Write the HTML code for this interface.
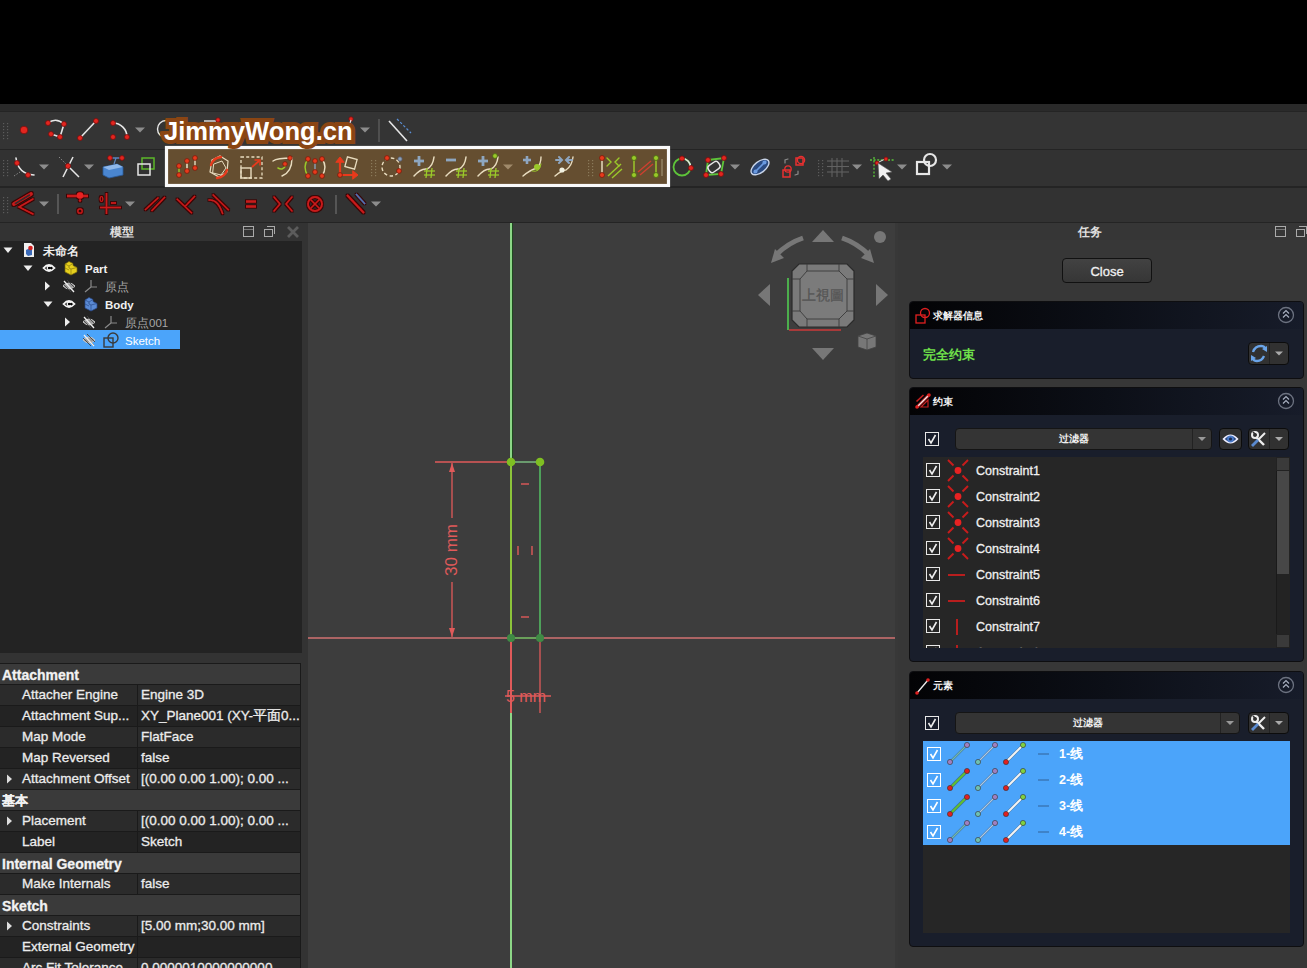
<!DOCTYPE html>
<html><head><meta charset="utf-8">
<style>
*{box-sizing:border-box;margin:0;padding:0}
html,body{width:1307px;height:968px;overflow:hidden;background:#000}
body{position:relative;font-family:"Liberation Sans",sans-serif;color:#fff}
.a{position:absolute;white-space:nowrap}
svg{position:absolute;left:0;top:0;overflow:visible}
.t{-webkit-text-stroke:0.3px currentColor}
.cb{position:absolute;width:14px;height:14px;border:1.5px solid #e8e8e8}
</style></head><body>

<div class="a" style="left:0;top:104px;width:1307px;height:7px;background:#2a2a2a"></div>
<div class="a" style="left:0;top:111px;width:1307px;height:1px;background:#242424"></div>
<div class="a" style="left:0;top:112px;width:1307px;height:110px;background:#343434"></div>
<div class="a" style="left:0;top:150px;width:1307px;height:72px;background:#323232"></div>
<div class="a" style="left:0;top:149px;width:1307px;height:1px;background:#242424"></div>
<div class="a" style="left:0;top:186px;width:1307px;height:2px;background:#242424"></div>
<div class="a" style="left:0;top:222px;width:1307px;height:1px;background:#242424"></div>
<div class="a" style="left:0;top:223px;width:1307px;height:745px;background:#333"></div>
<svg width="1307" height="968" viewBox="0 0 1307 968"><rect x="3" y="123" width="1.2" height="1.2" fill="#5c5c5c"/><rect x="7" y="123" width="1.2" height="1.2" fill="#5c5c5c"/><rect x="3" y="126" width="1.2" height="1.2" fill="#5c5c5c"/><rect x="7" y="126" width="1.2" height="1.2" fill="#5c5c5c"/><rect x="3" y="129" width="1.2" height="1.2" fill="#5c5c5c"/><rect x="7" y="129" width="1.2" height="1.2" fill="#5c5c5c"/><rect x="3" y="132" width="1.2" height="1.2" fill="#5c5c5c"/><rect x="7" y="132" width="1.2" height="1.2" fill="#5c5c5c"/><rect x="3" y="135" width="1.2" height="1.2" fill="#5c5c5c"/><rect x="7" y="135" width="1.2" height="1.2" fill="#5c5c5c"/><rect x="3" y="138" width="1.2" height="1.2" fill="#5c5c5c"/><rect x="7" y="138" width="1.2" height="1.2" fill="#5c5c5c"/><circle cx="24" cy="130" r="3.8" fill="#e3261f" stroke="#7a0d0d" stroke-width="0.8"/><path d="M48,123 Q56,117 64,124 L60,137 L51,134" stroke="#e6e6e6" stroke-width="1.6" fill="none" stroke-linecap="round" /><circle cx="48" cy="123" r="2.5" fill="#e3261f" stroke="#7a0d0d" stroke-width="0.8"/><circle cx="64" cy="124" r="2.5" fill="#e3261f" stroke="#7a0d0d" stroke-width="0.8"/><circle cx="60" cy="137" r="2.5" fill="#e3261f" stroke="#7a0d0d" stroke-width="0.8"/><circle cx="51" cy="134" r="2.5" fill="#e3261f" stroke="#7a0d0d" stroke-width="0.8"/><line x1="80" y1="138" x2="96" y2="121" stroke="#e6e6e6" stroke-width="1.6" /><circle cx="80" cy="138" r="2.5" fill="#e3261f" stroke="#7a0d0d" stroke-width="0.8"/><circle cx="96" cy="121" r="2.5" fill="#e3261f" stroke="#7a0d0d" stroke-width="0.8"/><path d="M113,123 A14,14 0 0 1 127,137" stroke="#e6e6e6" stroke-width="1.6" fill="none" stroke-linecap="round" /><circle cx="113" cy="123" r="2.5" fill="#e3261f" stroke="#7a0d0d" stroke-width="0.8"/><circle cx="113" cy="137" r="2.5" fill="#e3261f" stroke="#7a0d0d" stroke-width="0.8"/><circle cx="127" cy="137" r="2.5" fill="#e3261f" stroke="#7a0d0d" stroke-width="0.8"/><path d="M135,127.5 L145,127.5 L140,132.5Z" fill="#8c8c8c"/><circle cx="166" cy="129" r="8.5" fill="none" stroke="#e6e6e6" stroke-width="1.4"/><circle cx="163" cy="134" r="2.3" fill="#e3261f" stroke="#7a0d0d" stroke-width="0.8"/><line x1="204" y1="121" x2="216" y2="121" stroke="#e6e6e6" stroke-width="1.4" /><circle cx="218" cy="120" r="2.2" fill="#e3261f" stroke="#7a0d0d" stroke-width="0.8"/><circle cx="351" cy="119" r="2.2" fill="#e3261f" stroke="#7a0d0d" stroke-width="0.8"/><line x1="351" y1="120" x2="349" y2="126" stroke="#e6e6e6" stroke-width="1.2" /><path d="M360,127.5 L370,127.5 L365,132.5Z" fill="#8c8c8c"/><line x1="379" y1="119" x2="379" y2="142" stroke="#5f5f5f" stroke-width="1.3"/><line x1="389" y1="121" x2="407" y2="141" stroke="#e6e6e6" stroke-width="1.6" /><line x1="397" y1="119" x2="411" y2="133" stroke="#5b8fd6" stroke-width="1.2" stroke-dasharray="2.5,2"/><rect x="3" y="160" width="1.2" height="1.2" fill="#5c5c5c"/><rect x="7" y="160" width="1.2" height="1.2" fill="#5c5c5c"/><rect x="3" y="163" width="1.2" height="1.2" fill="#5c5c5c"/><rect x="7" y="163" width="1.2" height="1.2" fill="#5c5c5c"/><rect x="3" y="166" width="1.2" height="1.2" fill="#5c5c5c"/><rect x="7" y="166" width="1.2" height="1.2" fill="#5c5c5c"/><rect x="3" y="169" width="1.2" height="1.2" fill="#5c5c5c"/><rect x="7" y="169" width="1.2" height="1.2" fill="#5c5c5c"/><rect x="3" y="172" width="1.2" height="1.2" fill="#5c5c5c"/><rect x="7" y="172" width="1.2" height="1.2" fill="#5c5c5c"/><rect x="3" y="175" width="1.2" height="1.2" fill="#5c5c5c"/><rect x="7" y="175" width="1.2" height="1.2" fill="#5c5c5c"/><path d="M16,158 Q18,174 34,175" stroke="#e6e6e6" stroke-width="1.6" fill="none" stroke-linecap="round" /><line x1="14" y1="176" x2="20" y2="172" stroke="#888" stroke-width="1" stroke-dasharray="1.5,1.5"/><circle cx="17" cy="163" r="2.5" fill="#e3261f" stroke="#7a0d0d" stroke-width="0.8"/><circle cx="28" cy="175" r="2.5" fill="#e3261f" stroke="#7a0d0d" stroke-width="0.8"/><path d="M39,164.5 L49,164.5 L44,169.5Z" fill="#8c8c8c"/><line x1="73" y1="157" x2="63" y2="177" stroke="#e6e6e6" stroke-width="1.5" /><line x1="68" y1="166" x2="79" y2="177" stroke="#e6e6e6" stroke-width="1.5" /><line x1="59" y1="157" x2="66" y2="164" stroke="#888" stroke-width="1" stroke-dasharray="1.5,1.5"/><circle cx="68" cy="166" r="2.6" fill="#e3261f" stroke="#7a0d0d" stroke-width="0.8"/><path d="M84,164.5 L94,164.5 L89,169.5Z" fill="#8c8c8c"/><path d="M103,167 L117,164 L123,167 L123,175 L109,178 L103,175Z" fill="#4a86d0" stroke="#2a5a9a" stroke-width="0.8"/><path d="M103,167 L117,164 L123,167 L109,170Z" fill="#8fb8ea"/><line x1="110" y1="158" x2="122" y2="158" stroke="#5a86c0" stroke-width="1.5" /><line x1="116" y1="158" x2="114" y2="164" stroke="#5a86c0" stroke-width="1.2" /><circle cx="110" cy="158" r="2.4" fill="#e3261f" stroke="#7a0d0d" stroke-width="0.8"/><circle cx="122" cy="158" r="2.4" fill="#e3261f" stroke="#7a0d0d" stroke-width="0.8"/><rect x="142" y="158" width="12" height="11" fill="none" stroke="#5cb82a" stroke-width="1.5"/><rect x="138" y="164" width="12" height="11" fill="none" stroke="#e6e6e6" stroke-width="1.5"/><rect x="166.5" y="147.5" width="502" height="38" fill="#654e30" stroke="#fafafa" stroke-width="3.2"/><line x1="179" y1="166" x2="179" y2="175" stroke="#9bc92a" stroke-width="1.4" /><line x1="187" y1="161" x2="187" y2="171" stroke="#e8dcbf" stroke-width="1.6" /><line x1="195" y1="158" x2="195" y2="168" stroke="#e8dcbf" stroke-width="1.4" /><circle cx="179" cy="166" r="2.4" fill="#e83a1c" stroke="#7a1a0a" stroke-width="0.8"/><circle cx="179" cy="175" r="2.4" fill="#e83a1c" stroke="#7a1a0a" stroke-width="0.8"/><circle cx="187" cy="161" r="2.4" fill="#e83a1c" stroke="#7a1a0a" stroke-width="0.8"/><circle cx="187" cy="171" r="2.4" fill="#e83a1c" stroke="#7a1a0a" stroke-width="0.8"/><circle cx="195" cy="158" r="2.4" fill="#e83a1c" stroke="#7a1a0a" stroke-width="0.8"/><circle cx="195" cy="168" r="2.4" fill="#e83a1c" stroke="#7a1a0a" stroke-width="0.8"/><path d="M212,160 L220,156 L228,161 L227,172 L219,177 L210,172Z" stroke="#e8dcbf" stroke-width="1.2" fill="none" stroke-linecap="round" /><path d="M214,164 L222,161 L226,168 L221,175 L213,173Z" stroke="#e8dcbf" stroke-width="1.0" fill="none" stroke-linecap="round" /><path d="M211,165 Q213,158 221,157" stroke="#e83a1c" stroke-width="2.4" fill="none" stroke-linecap="round" /><path d="M227,170 Q225,177 217,178" stroke="#e83a1c" stroke-width="2.4" fill="none" stroke-linecap="round" /><rect x="241" y="157" width="21" height="21" fill="none" stroke="#e8dcbf" stroke-width="1.3" stroke-dasharray="3,2.2"/><rect x="241" y="168" width="10" height="10" fill="none" stroke="#e8dcbf" stroke-width="1.4"/><line x1="252" y1="167" x2="259" y2="161" stroke="#e83a1c" stroke-width="1.8" /><path d="M255,160 L260,160 L260,165" stroke="#e83a1c" stroke-width="1.4" fill="none" stroke-linecap="round" /><path d="M273,161 Q277,158 292,158 Q292,172 282,176" stroke="#e8dcbf" stroke-width="1.4" fill="none" stroke-linecap="round" /><path d="M278,168 Q283,171 286,165" stroke="#9bc92a" stroke-width="1.6" fill="none" stroke-linecap="round" /><circle cx="290" cy="158" r="2.3" fill="#e83a1c" stroke="#7a1a0a" stroke-width="0.8"/><circle cx="285" cy="164" r="2.3" fill="#e83a1c" stroke="#7a1a0a" stroke-width="0.8"/><path d="M308,159 Q302,167 308,176" stroke="#9bc92a" stroke-width="1.4" fill="none" stroke-linecap="round" /><path d="M322,159 Q328,167 322,176" stroke="#e8dcbf" stroke-width="1.4" fill="none" stroke-linecap="round" /><line x1="315" y1="161" x2="315" y2="172" stroke="#8ea6c0" stroke-width="1.3" /><circle cx="308" cy="159" r="2.4" fill="#e83a1c" stroke="#7a1a0a" stroke-width="0.8"/><circle cx="308" cy="176" r="2.4" fill="#e83a1c" stroke="#7a1a0a" stroke-width="0.8"/><circle cx="322" cy="159" r="2.4" fill="#e83a1c" stroke="#7a1a0a" stroke-width="0.8"/><circle cx="322" cy="176" r="2.4" fill="#e83a1c" stroke="#7a1a0a" stroke-width="0.8"/><circle cx="315" cy="161" r="2.4" fill="#e83a1c" stroke="#7a1a0a" stroke-width="0.8"/><circle cx="315" cy="172" r="2.4" fill="#e83a1c" stroke="#7a1a0a" stroke-width="0.8"/><path d="M340,175 L340,159" stroke="#e83a1c" stroke-width="2.2" fill="none" stroke-linecap="round" /><path d="M340,175 L356,175" stroke="#e83a1c" stroke-width="2.2" fill="none" stroke-linecap="round" /><path d="M336,162 L340,157 L344,162Z" stroke="#e83a1c" stroke-width="1" fill="#e83a1c" stroke-linecap="round" /><path d="M353,171 L358,175 L353,179Z" stroke="#e83a1c" stroke-width="1" fill="#e83a1c" stroke-linecap="round" /><circle cx="340" cy="175" r="2.4" fill="#e83a1c" stroke="#7a1a0a" stroke-width="0.8"/><rect x="346" y="158" width="10" height="10" fill="none" stroke="#e8dcbf" stroke-width="1.3" transform="rotate(15 351 163)"/><rect x="371" y="160" width="1.2" height="1.2" fill="#8a7a5a"/><rect x="375" y="160" width="1.2" height="1.2" fill="#8a7a5a"/><rect x="371" y="163" width="1.2" height="1.2" fill="#8a7a5a"/><rect x="375" y="163" width="1.2" height="1.2" fill="#8a7a5a"/><rect x="371" y="166" width="1.2" height="1.2" fill="#8a7a5a"/><rect x="375" y="166" width="1.2" height="1.2" fill="#8a7a5a"/><rect x="371" y="169" width="1.2" height="1.2" fill="#8a7a5a"/><rect x="375" y="169" width="1.2" height="1.2" fill="#8a7a5a"/><rect x="371" y="172" width="1.2" height="1.2" fill="#8a7a5a"/><rect x="375" y="172" width="1.2" height="1.2" fill="#8a7a5a"/><rect x="371" y="175" width="1.2" height="1.2" fill="#8a7a5a"/><rect x="375" y="175" width="1.2" height="1.2" fill="#8a7a5a"/><circle cx="391" cy="167" r="9" fill="none" stroke="#e8dcbf" stroke-width="1.4" stroke-dasharray="3.5,2.5"/><circle cx="387" cy="158" r="2.4" fill="#e83a1c" stroke="#7a1a0a" stroke-width="0.8"/><circle cx="399" cy="171" r="2.4" fill="#e83a1c" stroke="#7a1a0a" stroke-width="0.8"/><circle cx="400" cy="159" r="2.2" fill="#8aa0b8" stroke="#556" stroke-width="0.8"/><path d="M414,176 Q421,168 427,169 Q433,166 434,157" stroke="#e8dcbf" stroke-width="1.5" fill="none" stroke-linecap="round" /><line x1="414" y1="161" x2="424" y2="161" stroke="#8ea6c0" stroke-width="2.8" /><line x1="419" y1="156" x2="419" y2="166" stroke="#8ea6c0" stroke-width="2.8" /><line x1="427" y1="168" x2="426" y2="178" stroke="#9bc92a" stroke-width="1.3" /><line x1="432" y1="168" x2="431" y2="178" stroke="#9bc92a" stroke-width="1.3" /><line x1="424" y1="171" x2="435" y2="171" stroke="#9bc92a" stroke-width="1.3" /><line x1="424" y1="175" x2="435" y2="175" stroke="#9bc92a" stroke-width="1.3" /><path d="M446,176 Q453,168 459,169 Q465,166 466,157" stroke="#e8dcbf" stroke-width="1.5" fill="none" stroke-linecap="round" /><line x1="446" y1="160" x2="456" y2="160" stroke="#8ea6c0" stroke-width="2.8" /><line x1="459" y1="168" x2="458" y2="178" stroke="#9bc92a" stroke-width="1.3" /><line x1="464" y1="168" x2="463" y2="178" stroke="#9bc92a" stroke-width="1.3" /><line x1="456" y1="171" x2="467" y2="171" stroke="#9bc92a" stroke-width="1.3" /><line x1="456" y1="175" x2="467" y2="175" stroke="#9bc92a" stroke-width="1.3" /><path d="M478,176 Q485,168 491,169 Q497,166 498,157" stroke="#e8dcbf" stroke-width="1.5" fill="none" stroke-linecap="round" /><line x1="478" y1="161" x2="488" y2="161" stroke="#8ea6c0" stroke-width="2.8" /><line x1="483" y1="156" x2="483" y2="166" stroke="#8ea6c0" stroke-width="2.8" /><line x1="491" y1="168" x2="490" y2="178" stroke="#9bc92a" stroke-width="1.3" /><line x1="496" y1="168" x2="495" y2="178" stroke="#9bc92a" stroke-width="1.3" /><line x1="488" y1="171" x2="499" y2="171" stroke="#9bc92a" stroke-width="1.3" /><line x1="488" y1="175" x2="499" y2="175" stroke="#9bc92a" stroke-width="1.3" /><circle cx="495" cy="156" r="2.4" fill="#9bc92a" stroke="#4a6a10" stroke-width="0.8"/><path d="M503,164.5 L513,164.5 L508,169.5Z" fill="#a08a6a"/><path d="M523,176 Q530,170 537,168 Q541,164 541,157" stroke="#e8dcbf" stroke-width="1.4" fill="none" stroke-linecap="round" /><line x1="523" y1="160" x2="531" y2="160" stroke="#8ea6c0" stroke-width="2.6" /><line x1="527" y1="156" x2="527" y2="164" stroke="#8ea6c0" stroke-width="2.6" /><circle cx="537" cy="167" r="3" fill="#9bc92a"/><path d="M532,171 Q540,173 541,164" stroke="#9bc92a" stroke-width="1" fill="none" stroke-linecap="round" /><path d="M555,176 Q562,170 566,170 Q572,166 573,157" stroke="#e8dcbf" stroke-width="1.4" fill="none" stroke-linecap="round" /><path d="M556,160 L561,160 M559,157 L562,160 L559,163" stroke="#8ea6c0" stroke-width="2" fill="none" stroke-linecap="round" /><path d="M572,160 L567,160 M569,157 L566,160 L569,163" stroke="#8ea6c0" stroke-width="2" fill="none" stroke-linecap="round" /><circle cx="562" cy="170" r="2.6" fill="#f0f0e0"/><rect x="588" y="160" width="1.2" height="1.2" fill="#8a7a5a"/><rect x="592" y="160" width="1.2" height="1.2" fill="#8a7a5a"/><rect x="588" y="163" width="1.2" height="1.2" fill="#8a7a5a"/><rect x="592" y="163" width="1.2" height="1.2" fill="#8a7a5a"/><rect x="588" y="166" width="1.2" height="1.2" fill="#8a7a5a"/><rect x="592" y="166" width="1.2" height="1.2" fill="#8a7a5a"/><rect x="588" y="169" width="1.2" height="1.2" fill="#8a7a5a"/><rect x="592" y="169" width="1.2" height="1.2" fill="#8a7a5a"/><rect x="588" y="172" width="1.2" height="1.2" fill="#8a7a5a"/><rect x="592" y="172" width="1.2" height="1.2" fill="#8a7a5a"/><rect x="588" y="175" width="1.2" height="1.2" fill="#8a7a5a"/><rect x="592" y="175" width="1.2" height="1.2" fill="#8a7a5a"/><line x1="602" y1="158" x2="602" y2="175" stroke="#e8dcbf" stroke-width="1.5" /><circle cx="602" cy="158" r="2.5" fill="#e83a1c" stroke="#7a1a0a" stroke-width="0.8"/><circle cx="602" cy="175" r="2.5" fill="#e83a1c" stroke="#7a1a0a" stroke-width="0.8"/><path d="M607,158 L611,162 L607,166 M619,158 L615,162 L619,166" stroke="#9bc92a" stroke-width="1.4" fill="none" stroke-linecap="round" /><line x1="608" y1="176" x2="621" y2="164" stroke="#9bc92a" stroke-width="1.4" /><line x1="612" y1="178" x2="622" y2="169" stroke="#9bc92a" stroke-width="1.4" /><line x1="634" y1="158" x2="634" y2="175" stroke="#9bc92a" stroke-width="1.5" /><line x1="656" y1="158" x2="656" y2="175" stroke="#9bc92a" stroke-width="1.5" /><circle cx="634" cy="158" r="2.5" fill="#9bc92a" stroke="#4a6a10" stroke-width="0.8"/><circle cx="634" cy="175" r="2.5" fill="#9bc92a" stroke="#4a6a10" stroke-width="0.8"/><circle cx="656" cy="158" r="2.5" fill="#9bc92a" stroke="#4a6a10" stroke-width="0.8"/><circle cx="656" cy="175" r="2.5" fill="#9bc92a" stroke="#4a6a10" stroke-width="0.8"/><line x1="638" y1="172" x2="651" y2="161" stroke="#d04030" stroke-width="1.3" /><line x1="640" y1="175" x2="653" y2="164" stroke="#d04030" stroke-width="1.3" /><line x1="662" y1="159" x2="662" y2="176" stroke="#9a8a6a" stroke-width="1.3"/><circle cx="682" cy="167" r="8.5" fill="none" stroke="#5ec43a" stroke-width="1.8"/><path d="M682,158.5 A8.5,8.5 0 0 1 690.5,167" stroke="#e0e0e0" stroke-width="1.6" fill="none" stroke-linecap="round" /><circle cx="682" cy="158.5" r="2.5" fill="#e3261f" stroke="#7a0d0d" stroke-width="0.8"/><circle cx="691" cy="168" r="2.5" fill="#e3261f" stroke="#7a0d0d" stroke-width="0.8"/><path d="M708,160 L724,158 L721,174 L706,175Z" fill="none" stroke="#5ec43a" stroke-width="1.8"/><rect x="708" y="163" width="12" height="8" rx="3" fill="#343434" stroke="#e6e6e6" stroke-width="1.5" transform="rotate(-35 714 167)"/><circle cx="708" cy="160" r="2.5" fill="#e3261f" stroke="#7a0d0d" stroke-width="0.8"/><circle cx="724" cy="158" r="2.5" fill="#e3261f" stroke="#7a0d0d" stroke-width="0.8"/><circle cx="721" cy="174" r="2.5" fill="#e3261f" stroke="#7a0d0d" stroke-width="0.8"/><circle cx="706" cy="175" r="2.5" fill="#e3261f" stroke="#7a0d0d" stroke-width="0.8"/><path d="M730,164.5 L740,164.5 L735,169.5Z" fill="#8c8c8c"/><ellipse cx="760" cy="167" rx="10.5" ry="5.5" fill="#2a4a80" stroke="#c8d4e8" stroke-width="1.4" transform="rotate(-38 760 167)"/><line x1="754" y1="173" x2="766" y2="161" stroke="#6a9ae0" stroke-width="1.6" /><circle cx="755.5" cy="171.5" r="2" fill="#6a9ae0"/><circle cx="764.5" cy="162.5" r="2" fill="#6a9ae0"/><rect x="783" y="170" width="7" height="7" fill="none" stroke="#e83030" stroke-width="1.5"/><rect x="796" y="158" width="7" height="7" fill="none" stroke="#e83030" stroke-width="1.5"/><circle cx="801" cy="160" r="3.6" fill="none" stroke="#e83030" stroke-width="1.4"/><circle cx="788" cy="169" r="3.2" fill="none" stroke="#e83030" stroke-width="1.3"/><path d="M785,163 L785,160 L788,159 M798,171 L798,174 L795,175" stroke="#8a8a8a" stroke-width="1.2" fill="none" stroke-linecap="round" /><rect x="818" y="160" width="1.2" height="1.2" fill="#5c5c5c"/><rect x="822" y="160" width="1.2" height="1.2" fill="#5c5c5c"/><rect x="818" y="163" width="1.2" height="1.2" fill="#5c5c5c"/><rect x="822" y="163" width="1.2" height="1.2" fill="#5c5c5c"/><rect x="818" y="166" width="1.2" height="1.2" fill="#5c5c5c"/><rect x="822" y="166" width="1.2" height="1.2" fill="#5c5c5c"/><rect x="818" y="169" width="1.2" height="1.2" fill="#5c5c5c"/><rect x="822" y="169" width="1.2" height="1.2" fill="#5c5c5c"/><rect x="818" y="172" width="1.2" height="1.2" fill="#5c5c5c"/><rect x="822" y="172" width="1.2" height="1.2" fill="#5c5c5c"/><rect x="818" y="175" width="1.2" height="1.2" fill="#5c5c5c"/><rect x="822" y="175" width="1.2" height="1.2" fill="#5c5c5c"/><line x1="832" y1="158" x2="832" y2="177" stroke="#626262" stroke-width="1.1" /><line x1="827" y1="161.0" x2="849" y2="161.0" stroke="#626262" stroke-width="1.1" /><line x1="837" y1="158" x2="837" y2="177" stroke="#626262" stroke-width="1.1" /><line x1="827" y1="166.5" x2="849" y2="166.5" stroke="#626262" stroke-width="1.1" /><line x1="842" y1="158" x2="842" y2="177" stroke="#626262" stroke-width="1.1" /><line x1="827" y1="172.0" x2="849" y2="172.0" stroke="#626262" stroke-width="1.1" /><path d="M852,164.5 L862,164.5 L857,169.5Z" fill="#8c8c8c"/><line x1="874" y1="157" x2="874" y2="178" stroke="#5ac43a" stroke-width="1.3" stroke-dasharray="2,1.6"/><line x1="870" y1="160" x2="894" y2="160" stroke="#5ac43a" stroke-width="1.3" stroke-dasharray="2,1.6"/><line x1="877" y1="163" x2="885" y2="159" stroke="#e0e0e0" stroke-width="1" /><circle cx="877" cy="163" r="2" fill="#e3261f" stroke="#7a0d0d" stroke-width="0.8"/><circle cx="886" cy="159" r="2" fill="#e3261f" stroke="#7a0d0d" stroke-width="0.8"/><path d="M878,163 L892,172 L886,173 L891,179 L888,181 L883,175 L879,179Z" fill="#f0f0f0" stroke="#555" stroke-width="0.6"/><path d="M897,164.5 L907,164.5 L902,169.5Z" fill="#8c8c8c"/><rect x="917" y="162" width="12" height="12" fill="#2a2a2a" stroke="#e6e6e6" stroke-width="2.2"/><circle cx="930" cy="160" r="6" fill="none" stroke="#e6e6e6" stroke-width="2.2"/><path d="M942,164.5 L952,164.5 L947,169.5Z" fill="#8c8c8c"/><rect x="3" y="197" width="1.2" height="1.2" fill="#5c5c5c"/><rect x="7" y="197" width="1.2" height="1.2" fill="#5c5c5c"/><rect x="3" y="200" width="1.2" height="1.2" fill="#5c5c5c"/><rect x="7" y="200" width="1.2" height="1.2" fill="#5c5c5c"/><rect x="3" y="203" width="1.2" height="1.2" fill="#5c5c5c"/><rect x="7" y="203" width="1.2" height="1.2" fill="#5c5c5c"/><rect x="3" y="206" width="1.2" height="1.2" fill="#5c5c5c"/><rect x="7" y="206" width="1.2" height="1.2" fill="#5c5c5c"/><rect x="3" y="209" width="1.2" height="1.2" fill="#5c5c5c"/><rect x="7" y="209" width="1.2" height="1.2" fill="#5c5c5c"/><rect x="3" y="212" width="1.2" height="1.2" fill="#5c5c5c"/><rect x="7" y="212" width="1.2" height="1.2" fill="#5c5c5c"/><path d="M39,201.5 L49,201.5 L44,206.5Z" fill="#8c8c8c"/><path d="M125,201.5 L135,201.5 L130,206.5Z" fill="#8c8c8c"/><path d="M371,201.5 L381,201.5 L376,206.5Z" fill="#8c8c8c"/><line x1="58" y1="194" x2="58" y2="214" stroke="#6a6a6a" stroke-width="1.3"/><line x1="336" y1="195" x2="336" y2="214" stroke="#6a6a6a" stroke-width="1.3"/><defs><filter id="ol" x="-20%" y="-20%" width="140%" height="140%"><feMorphology operator="dilate" radius="0.9" in="SourceAlpha" result="d"/><feFlood flood-color="#3a0505" flood-opacity="0.9"/><feComposite in2="d" operator="in" result="o"/><feMerge><feMergeNode in="o"/><feMergeNode in="SourceGraphic"/></feMerge></filter></defs><g filter="url(#ol)"><path d="M33,199 L19,207 L33,214" stroke="#c81a1a" stroke-width="1.5" fill="none" stroke-linecap="round" /><path d="M14,204 L31,194" stroke="#c81a1a" stroke-width="3.6" fill="none" stroke-linecap="round" /><path d="M15.5,203.5 L29.5,195" stroke="#3a2a2a" stroke-width="1.6" fill="none" stroke-linecap="round" /><line x1="67" y1="196" x2="88" y2="196" stroke="#c81a1a" stroke-width="2.4" /><circle cx="80" cy="195.5" r="3.2" fill="#e82020"/><circle cx="80" cy="200.5" r="1.2" fill="#c81a1a"/><circle cx="80" cy="211" r="2.2" fill="none" stroke="#c81a1a" stroke-width="1.3"/><line x1="106.5" y1="193" x2="106.5" y2="214" stroke="#c81a1a" stroke-width="1.5" /><line x1="100" y1="207.5" x2="121" y2="207.5" stroke="#c81a1a" stroke-width="1.5" /><ellipse cx="101.5" cy="199" rx="1.3" ry="2.5" fill="none" stroke="#c81a1a" stroke-width="1.1"/><line x1="111" y1="203" x2="116" y2="203" stroke="#c81a1a" stroke-width="1.8" /><line x1="145" y1="210" x2="158.5" y2="197.5" stroke="#c81a1a" stroke-width="1.5" /><line x1="151.5" y1="211" x2="165" y2="197" stroke="#c81a1a" stroke-width="1.5" /><line x1="176.7" y1="198.7" x2="192" y2="213.2" stroke="#c81a1a" stroke-width="1.5" /><line x1="185" y1="206.5" x2="195" y2="196" stroke="#c81a1a" stroke-width="1.5" /><line x1="212.7" y1="194.5" x2="228.8" y2="210.2" stroke="#c81a1a" stroke-width="1.5" /><path d="M209,200 Q218,199 222.6,213.6" stroke="#c81a1a" stroke-width="1.5" fill="none" stroke-linecap="round" /><line x1="246" y1="201.5" x2="256" y2="201.5" stroke="#c81a1a" stroke-width="2.4" /><line x1="246" y1="206.5" x2="256" y2="206.5" stroke="#c81a1a" stroke-width="2.4" /><path d="M274,197 L280,204 L274,211" stroke="#c81a1a" stroke-width="1.5" fill="none" stroke-linecap="round" /><path d="M292,197 L286,204 L292,211" stroke="#c81a1a" stroke-width="1.5" fill="none" stroke-linecap="round" /><circle cx="315" cy="204" r="7" fill="none" stroke="#c81a1a" stroke-width="1.8"/><line x1="310.5" y1="199.5" x2="319.5" y2="208.5" stroke="#c81a1a" stroke-width="1.4" /><line x1="319.5" y1="199.5" x2="310.5" y2="208.5" stroke="#c81a1a" stroke-width="1.4" /><line x1="347" y1="195" x2="364" y2="213" stroke="#c81a1a" stroke-width="2" /><line x1="356" y1="194" x2="365" y2="204" stroke="#5570b0" stroke-width="1.5" /></g></svg>
<svg width="1307" height="968" viewBox="0 0 1307 968"><text x="164" y="140" font-family="Liberation Sans" font-weight="bold" font-size="25.6" fill="#fff" stroke="#8a4513" stroke-width="8" stroke-linejoin="miter" stroke-miterlimit="2" paint-order="stroke">JimmyWong.cn</text></svg>
<div class="a" style="left:0;top:223px;width:244px;height:18px;text-align:center;font-size:12px;font-weight:bold;line-height:19px;color:#e0e0e0">模型</div>
<div class="a" style="left:243px;top:226px;width:11px;height:11px;border:1.3px solid #aaa"></div><div class="a" style="left:244px;top:229px;width:9px;height:1px;background:#777"></div><div class="a" style="left:264px;top:229px;width:9px;height:8px;border:1.3px solid #aaa"></div><div class="a" style="left:267px;top:226px;width:8px;height:8px;border:1.3px solid #aaa;border-left:none;border-bottom:none"></div><svg><path d="M288,227 L298,237 M298,227 L288,237" stroke="#5c5c5c" stroke-width="2.8"/></svg>
<div class="a" style="left:0;top:241px;width:302px;height:412px;background:#232323"></div>
<div class="a" style="left:0;top:330px;width:180px;height:19px;background:#4ba4fa"></div>
<svg><path d="M3.5,247.5 L12.5,247.5 L8,253Z" fill="#eee"/></svg>
<svg><path d="M24,243 L31,243 L34,246 L34,257 L24,257Z" fill="#f0f0f0"/><path d="M26,250 L30,248 L32,250 L32,255 L28,256 L26,254Z" fill="#3a6ab8"/><circle cx="30.5" cy="248" r="2.3" fill="#d02020"/></svg>
<div class="a" style="left:43px;top:244px;font-size:11.5px;line-height:14px;font-weight:bold;color:#f0f0f0">未命名</div>
<svg><path d="M23.5,265.5 L32.5,265.5 L28,271Z" fill="#eee"/></svg>
<svg><path d="M43.5,268 Q49,262 54.5,268 Q49,274 43.5,268Z" fill="#000" stroke="#f4f4f4" stroke-width="1.8"/><path d="M50.8,266.8 A2,2 0 1 0 50.8,269.2" fill="none" stroke="#f4f4f4" stroke-width="1.3"/></svg>
<svg><path d="M65,264 L69,261.5 L73,263.5 L73,265.5 L77,267.5 L77,272 L71,275 L65,272Z" fill="#e6cf1e" stroke="#7a6a08" stroke-width="0.7"/><path d="M65,264 L69,266 L73,263.5 M69,266 L69,268 L71,269 L77,267.5 M65,268 L69,270 M71,269 L71,275" stroke="#8a7a10" stroke-width="0.7" fill="none"/></svg>
<div class="a" style="left:85px;top:262px;font-size:11.5px;line-height:14px;font-weight:bold;color:#f0f0f0">Part</div>
<svg><path d="M45,281.5 L50,286 L45,290.5Z" fill="#eee"/></svg>
<svg><path d="M63,286 Q69,280 75,286 Q69,292 63,286Z" fill="#9a9a9a" stroke="#c8c8c8" stroke-width="1"/><path d="M65,282 L74,291 M63,284 L71,292 M67,280 L75,288" stroke="#444" stroke-width="0.9"/><path d="M64,281 L74,292" stroke="#f0f0f0" stroke-width="1.3"/></svg>
<svg><path d="M91,280 L91,287 L97,287 M91,287 L85,292" stroke="#8a8a8a" stroke-width="1.2" fill="none"/></svg>
<div class="a" style="left:105px;top:280px;font-size:11.5px;line-height:14px;color:#a8a8a8">原点</div>
<svg><path d="M43.5,301.5 L52.5,301.5 L48,307Z" fill="#eee"/></svg>
<svg><path d="M63.5,304 Q69,298 74.5,304 Q69,310 63.5,304Z" fill="#000" stroke="#f4f4f4" stroke-width="1.8"/><path d="M70.8,302.8 A2,2 0 1 0 70.8,305.2" fill="none" stroke="#f4f4f4" stroke-width="1.3"/></svg>
<svg><path d="M85,300 L89,297.5 L93,299.5 L93,301.5 L97,303.5 L97,308 L91,311 L85,308Z" fill="#5a8ad4" stroke="#28488a" stroke-width="0.7"/><path d="M85,300 L89,302 L93,299.5 M89,302 L89,304 L91,305 L97,303.5 M85,304 L89,306 M91,305 L91,311" stroke="#2a4a8a" stroke-width="0.7" fill="none"/></svg>
<div class="a" style="left:105px;top:298px;font-size:11.5px;line-height:14px;font-weight:bold;color:#f0f0f0">Body</div>
<svg><path d="M65,317.5 L70,322 L65,326.5Z" fill="#eee"/></svg>
<svg><path d="M83,322 Q89,316 95,322 Q89,328 83,322Z" fill="#9a9a9a" stroke="#c8c8c8" stroke-width="1"/><path d="M85,318 L94,327 M83,320 L91,328 M87,316 L95,324" stroke="#444" stroke-width="0.9"/><path d="M84,317 L94,328" stroke="#f0f0f0" stroke-width="1.3"/></svg>
<svg><path d="M111,316 L111,323 L117,323 M111,323 L105,328" stroke="#8a8a8a" stroke-width="1.2" fill="none"/></svg>
<div class="a" style="left:125px;top:316px;font-size:11.5px;line-height:14px;color:#a8a8a8">原点001</div>
<svg><path d="M83,340 Q89,334 95,340 Q89,346 83,340Z" fill="#9a9a9a" stroke="#c8c8c8" stroke-width="1"/><path d="M85,336 L94,345 M83,338 L91,346 M87,334 L95,342" stroke="#444" stroke-width="0.9"/><path d="M84,335 L94,346" stroke="#f0f0f0" stroke-width="1.3"/></svg>
<svg><rect x="104" y="338" width="9" height="9" fill="none" stroke="#3a3a3a" stroke-width="1.4"/><circle cx="113" cy="338" r="5" fill="none" stroke="#3a3a3a" stroke-width="1.4"/></svg>
<div class="a" style="left:125px;top:334px;font-size:11.5px;line-height:14px;color:#fff">Sketch</div>
<div class="a" style="left:0;top:663px;width:301px;height:305px;background:#1a1a1a"></div>
<div class="a t" style="left:0;top:664px;width:300px;height:20px;background:#3a3a3a;font-size:14px;font-weight:bold;line-height:22px;padding-left:2px;color:#f2f2f2">Attachment</div>
<div class="a" style="left:0;top:685px;width:19px;height:20px;background:#2b2b2b"></div>
<div class="a t" style="left:19px;top:685px;width:118px;height:20px;background:#2b2b2b;font-size:13.5px;line-height:20.6px;padding-left:3px;color:#ececec;overflow:hidden">Attacher Engine</div>
<div class="a t" style="left:138px;top:685px;width:162px;height:20px;background:#2b2b2b;font-size:13.5px;line-height:20.6px;padding-left:3px;color:#ececec;overflow:hidden">Engine 3D</div>
<div class="a" style="left:0;top:706px;width:19px;height:20px;background:#232323"></div>
<div class="a t" style="left:19px;top:706px;width:118px;height:20px;background:#232323;font-size:13.5px;line-height:20.6px;padding-left:3px;color:#ececec;overflow:hidden">Attachment Sup...</div>
<div class="a t" style="left:138px;top:706px;width:162px;height:20px;background:#232323;font-size:13.5px;line-height:20.6px;padding-left:3px;color:#ececec;overflow:hidden">XY_Plane001 (XY-平面0...</div>
<div class="a" style="left:0;top:727px;width:19px;height:20px;background:#2b2b2b"></div>
<div class="a t" style="left:19px;top:727px;width:118px;height:20px;background:#2b2b2b;font-size:13.5px;line-height:20.6px;padding-left:3px;color:#ececec;overflow:hidden">Map Mode</div>
<div class="a t" style="left:138px;top:727px;width:162px;height:20px;background:#2b2b2b;font-size:13.5px;line-height:20.6px;padding-left:3px;color:#ececec;overflow:hidden">FlatFace</div>
<div class="a" style="left:0;top:748px;width:19px;height:20px;background:#232323"></div>
<div class="a t" style="left:19px;top:748px;width:118px;height:20px;background:#232323;font-size:13.5px;line-height:20.6px;padding-left:3px;color:#ececec;overflow:hidden">Map Reversed</div>
<div class="a t" style="left:138px;top:748px;width:162px;height:20px;background:#232323;font-size:13.5px;line-height:20.6px;padding-left:3px;color:#ececec;overflow:hidden">false</div>
<div class="a" style="left:0;top:769px;width:19px;height:20px;background:#2b2b2b"></div>
<div class="a t" style="left:19px;top:769px;width:118px;height:20px;background:#2b2b2b;font-size:13.5px;line-height:20.6px;padding-left:3px;color:#ececec;overflow:hidden">Attachment Offset</div>
<div class="a t" style="left:138px;top:769px;width:162px;height:20px;background:#2b2b2b;font-size:13.5px;line-height:20.6px;padding-left:3px;color:#ececec;overflow:hidden">[(0.00 0.00 1.00); 0.00 ...</div>
<svg><path d="M7,774.5 L12,779 L7,783.5Z" fill="#ddd"/></svg>
<div class="a t" style="left:0;top:790px;width:300px;height:20px;background:#3a3a3a;font-size:12.5px;font-weight:bold;line-height:22px;padding-left:2px;color:#f2f2f2">基本</div>
<div class="a" style="left:0;top:811px;width:19px;height:20px;background:#2b2b2b"></div>
<div class="a t" style="left:19px;top:811px;width:118px;height:20px;background:#2b2b2b;font-size:13.5px;line-height:20.6px;padding-left:3px;color:#ececec;overflow:hidden">Placement</div>
<div class="a t" style="left:138px;top:811px;width:162px;height:20px;background:#2b2b2b;font-size:13.5px;line-height:20.6px;padding-left:3px;color:#ececec;overflow:hidden">[(0.00 0.00 1.00); 0.00 ...</div>
<svg><path d="M7,816.5 L12,821 L7,825.5Z" fill="#ddd"/></svg>
<div class="a" style="left:0;top:832px;width:19px;height:20px;background:#232323"></div>
<div class="a t" style="left:19px;top:832px;width:118px;height:20px;background:#232323;font-size:13.5px;line-height:20.6px;padding-left:3px;color:#ececec;overflow:hidden">Label</div>
<div class="a t" style="left:138px;top:832px;width:162px;height:20px;background:#232323;font-size:13.5px;line-height:20.6px;padding-left:3px;color:#ececec;overflow:hidden">Sketch</div>
<div class="a t" style="left:0;top:853px;width:300px;height:20px;background:#3a3a3a;font-size:14px;font-weight:bold;line-height:22px;padding-left:2px;color:#f2f2f2">Internal Geometry</div>
<div class="a" style="left:0;top:874px;width:19px;height:20px;background:#2b2b2b"></div>
<div class="a t" style="left:19px;top:874px;width:118px;height:20px;background:#2b2b2b;font-size:13.5px;line-height:20.6px;padding-left:3px;color:#ececec;overflow:hidden">Make Internals</div>
<div class="a t" style="left:138px;top:874px;width:162px;height:20px;background:#2b2b2b;font-size:13.5px;line-height:20.6px;padding-left:3px;color:#ececec;overflow:hidden">false</div>
<div class="a t" style="left:0;top:895px;width:300px;height:20px;background:#3a3a3a;font-size:14px;font-weight:bold;line-height:22px;padding-left:2px;color:#f2f2f2">Sketch</div>
<div class="a" style="left:0;top:916px;width:19px;height:20px;background:#2b2b2b"></div>
<div class="a t" style="left:19px;top:916px;width:118px;height:20px;background:#2b2b2b;font-size:13.5px;line-height:20.6px;padding-left:3px;color:#ececec;overflow:hidden">Constraints</div>
<div class="a t" style="left:138px;top:916px;width:162px;height:20px;background:#2b2b2b;font-size:13.5px;line-height:20.6px;padding-left:3px;color:#ececec;overflow:hidden">[5.00 mm;30.00 mm]</div>
<svg><path d="M7,921.5 L12,926 L7,930.5Z" fill="#ddd"/></svg>
<div class="a" style="left:0;top:937px;width:19px;height:20px;background:#232323"></div>
<div class="a t" style="left:19px;top:937px;width:118px;height:20px;background:#232323;font-size:13.5px;line-height:20.6px;padding-left:3px;color:#ececec;overflow:hidden">External Geometry</div>
<div class="a t" style="left:138px;top:937px;width:162px;height:20px;background:#232323;font-size:13.5px;line-height:20.6px;padding-left:3px;color:#ececec;overflow:hidden"></div>
<div class="a" style="left:0;top:958px;width:19px;height:20px;background:#2b2b2b"></div>
<div class="a t" style="left:19px;top:958px;width:118px;height:20px;background:#2b2b2b;font-size:13.5px;line-height:20.6px;padding-left:3px;color:#ececec;overflow:hidden">Arc Fit Tolerance</div>
<div class="a t" style="left:138px;top:958px;width:162px;height:20px;background:#2b2b2b;font-size:13.5px;line-height:20.6px;padding-left:3px;color:#ececec;overflow:hidden">0.0000010000000000</div>
<div class="a" style="left:308px;top:223px;width:587px;height:745px;background:#3d3d3d"></div>
<svg width="1307" height="968"><line x1="308" y1="638" x2="895" y2="638" stroke="#d27272" stroke-width="1.6"/><line x1="511" y1="223" x2="511" y2="968" stroke="#96e890" stroke-width="1.8"/><line x1="512.5" y1="223" x2="512.5" y2="462" stroke="#1e4a1e" stroke-width="1"/><line x1="511" y1="462" x2="540" y2="462" stroke="#6a9a6e" stroke-width="2"/><line x1="511" y1="462" x2="511" y2="638" stroke="#8cc43a" stroke-width="2"/><line x1="540" y1="462" x2="540" y2="638" stroke="#4ea05a" stroke-width="2"/><line x1="511" y1="638" x2="540" y2="638" stroke="#6aa05a" stroke-width="2"/><line x1="435" y1="462" x2="509" y2="462" stroke="#e05a5a" stroke-width="1.3"/><line x1="452" y1="463" x2="452" y2="518" stroke="#e05a5a" stroke-width="1.3"/><line x1="452" y1="582" x2="452" y2="637" stroke="#e05a5a" stroke-width="1.3"/><path d="M449,472 L452,463 L455,472Z" fill="#e05a5a"/><path d="M449,628 L452,637 L455,628Z" fill="#e05a5a"/><text transform="translate(457 550) rotate(-90)" text-anchor="middle" font-family="Liberation Sans" font-size="17" fill="#e05a5a">30 mm</text><line x1="511" y1="640" x2="511" y2="713" stroke="#e05a5a" stroke-width="2"/><line x1="540" y1="640" x2="540" y2="713" stroke="#e05a5a" stroke-width="1.3"/><line x1="505" y1="696" x2="551" y2="696" stroke="#e05a5a" stroke-width="1.3"/><text x="526" y="702" text-anchor="middle" font-family="Liberation Sans" font-size="16" fill="#e05a5a">5 mm</text><line x1="521" y1="484" x2="529" y2="484" stroke="#e05a5a" stroke-width="1.4"/><line x1="521" y1="617" x2="529" y2="617" stroke="#e05a5a" stroke-width="1.4"/><line x1="518" y1="546" x2="518" y2="555" stroke="#e05a5a" stroke-width="1.4"/><line x1="532" y1="546" x2="532" y2="555" stroke="#e05a5a" stroke-width="1.4"/><circle cx="511" cy="462" r="4.3" fill="#7fbf22"/><circle cx="540" cy="462" r="4.3" fill="#7fbf22"/><circle cx="511" cy="638" r="4" fill="#3f8a45"/><circle cx="540" cy="638" r="4" fill="#3f8a45"/><path d="M812,242 L834,242 L823,230Z" fill="#777"/><path d="M812,348 L834,348 L823,360Z" fill="#777"/><path d="M770,284 L770,306 L758,295Z" fill="#777"/><path d="M876,284 L876,306 L888,295Z" fill="#777"/><circle cx="880" cy="237" r="6" fill="#777"/><path d="M803,238 Q788,243 776,255" stroke="#777" stroke-width="5" fill="none"/><path d="M771,263 L775,249 L784,258Z" fill="#777"/><path d="M842,238 Q857,243 869,255" stroke="#777" stroke-width="5" fill="none"/><path d="M874,263 L870,249 L861,258Z" fill="#777"/><path d="M799,264 L847,264 L854,271 L854,320 L847,327 L799,327 L792,320 L792,271Z" fill="#7a7a7a" stroke="#2a2a2a" stroke-width="1.2"/><path d="M807,271 L839,271 L847,279 L847,311 L839,319 L807,319 L800,311 L800,279Z" fill="#7b7b7b" stroke="#3a3a3a" stroke-width="0.9"/><path d="M807,264 L807,271 M839,264 L839,271 M807,319 L807,327 M839,319 L839,327 M792,279 L800,279 M792,311 L800,311 M847,279 L854,279 M847,311 L854,311" stroke="#3a3a3a" stroke-width="0.9"/><text x="823" y="299.5" text-anchor="middle" font-size="14" fill="#555" stroke="#555" stroke-width="0.3">上視圖</text><line x1="788" y1="278" x2="788" y2="330" stroke="#4cae4c" stroke-width="2"/><line x1="789" y1="330" x2="841" y2="330" stroke="#a83a3a" stroke-width="2"/><path d="M858,336 L867,333 L876,336 L876,347 L867,350 L858,347Z" fill="#777" stroke="#444" stroke-width="0.8"/><path d="M858,336 L867,339 L876,336 M867,339 L867,350" stroke="#444" stroke-width="0.8" fill="none"/></svg>
<div class="a" style="left:895px;top:223px;width:3px;height:745px;background:#383838"></div>
<div class="a" style="left:898px;top:223px;width:409px;height:745px;background:#373737"></div>
<div class="a" style="left:898px;top:223px;width:409px;height:17px;background:#363636"></div>
<div class="a" style="left:1040px;top:223px;width:100px;height:18px;text-align:center;font-size:12px;font-weight:bold;line-height:19px;color:#e0e0e0">任务</div>
<div class="a" style="left:1275px;top:226px;width:11px;height:11px;border:1.3px solid #aaa"></div><div class="a" style="left:1276px;top:229px;width:9px;height:1px;background:#777"></div><div class="a" style="left:1296px;top:229px;width:9px;height:8px;border:1.3px solid #aaa"></div><div class="a" style="left:1299px;top:226px;width:8px;height:8px;border:1.3px solid #aaa;border-left:none;border-bottom:none"></div>
<div class="a" style="left:1062px;top:258px;width:90px;height:25px;border:1px solid #111;border-radius:4px;background:linear-gradient(#424242,#363636);text-align:center;font-size:13px;line-height:26px;color:#f0f0f0;-webkit-text-stroke:0.3px #f0f0f0">Close</div>
<div class="a" style="left:909px;top:301px;width:395px;height:78px;border-radius:4px;background:#191e2b;border:1px solid #0e0e10"></div><div class="a" style="left:910px;top:302px;width:393px;height:27px;border-radius:3px 3px 0 0;background:linear-gradient(90deg,#030305,#0c0f17 50%,#171c2a)"></div><div class="a" style="left:933px;top:309px;font-size:9.5px;font-weight:bold;line-height:14px;color:#f4f4f4">求解器信息</div><svg><circle cx="1286" cy="315" r="7.5" fill="none" stroke="#6c7280" stroke-width="1.3"/><path d="M1283,313.5 L1286,310.5 L1289,313.5 M1283,317.5 L1286,314.5 L1289,317.5" stroke="#a8b0c0" stroke-width="1.2" fill="none"/></svg><svg><rect x="916" y="315" width="9" height="8" fill="none" stroke="#e02020" stroke-width="1.3"/><circle cx="925" cy="313" r="4.5" fill="none" stroke="#e02020" stroke-width="1.3"/></svg>
<div class="a" style="left:923px;top:346.5px;font-size:12.5px;font-weight:bold;line-height:16px;color:#6fe04a">完全约束</div>
<div class="a" style="left:1248px;top:342px;width:41px;height:23px;border:1px solid #0c0c0c;border-radius:4px;background:#313131"></div><div class="a" style="left:1269px;top:343px;width:1px;height:21px;background:#222"></div><svg><path d="M1275,351.5 L1283,351.5 L1279,355.5Z" fill="#aaa"/></svg><svg><path d="M1253,352 Q1255,346 1261,346 Q1264,346 1265,348" stroke="#6aa4e8" stroke-width="2.3" fill="none"/><path d="M1262,349 L1267,346 L1267,352Z" fill="#6aa4e8"/><path d="M1264,356 Q1262,361 1257,361 Q1254,361 1253,359" stroke="#6aa4e8" stroke-width="2.3" fill="none"/><path d="M1256,358 L1251,361 L1251,355Z" fill="#6aa4e8"/></svg>
<div class="a" style="left:909px;top:387px;width:395px;height:275px;border-radius:4px;background:#191e2b;border:1px solid #0e0e10"></div><div class="a" style="left:910px;top:388px;width:393px;height:27px;border-radius:3px 3px 0 0;background:linear-gradient(90deg,#030305,#0c0f17 50%,#171c2a)"></div><div class="a" style="left:933px;top:395px;font-size:9.5px;font-weight:bold;line-height:14px;color:#f4f4f4">约束</div><svg><circle cx="1286" cy="401" r="7.5" fill="none" stroke="#6c7280" stroke-width="1.3"/><path d="M1283,399.5 L1286,396.5 L1289,399.5 M1283,403.5 L1286,400.5 L1289,403.5" stroke="#a8b0c0" stroke-width="1.2" fill="none"/></svg><svg><path d="M916.5,401.5 L923.5,395" stroke="#c82020" stroke-width="1.6"/><path d="M921,407 L928,400 L928,407Z" stroke="#c82020" stroke-width="1.2" fill="none"/><line x1="917" y1="407" x2="929" y2="395" stroke="#c02020" stroke-width="3"/><line x1="918" y1="406" x2="928" y2="396" stroke="#eee" stroke-width="1.2"/><circle cx="917" cy="407" r="1.8" fill="#e02020"/><circle cx="929" cy="395" r="1.8" fill="#e02020"/></svg>
<div class="cb" style="left:925px;top:432px"></div><svg><path d="M928.5,439 L931,443 L935.5,435" stroke="#eee" stroke-width="1.6" fill="none"/></svg><div class="a" style="left:955px;top:428px;width:257px;height:22px;border:1px solid #151515;border-radius:4px;background:#343434"></div><div class="a" style="left:1192px;top:429px;width:1px;height:20px;background:#222"></div><svg><path d="M1198,437 L1206,437 L1202,441Z" fill="#999"/></svg><div class="a" style="left:955px;top:432px;width:237px;text-align:center;font-size:10px;font-weight:bold;line-height:14px;color:#f0f0f0">过滤器</div><div class="a" style="left:1219px;top:428px;width:23px;height:22px;border:1px solid #0c0c0c;border-radius:4px;background:#313131"></div><svg><path d="M1223.5,439 Q1230.5,431.5 1237.5,439 Q1230.5,446.5 1223.5,439Z" fill="#2a4a80" stroke="#eef" stroke-width="1.6"/><circle cx="1230.5" cy="439" r="3.4" fill="#4a7ac8"/><circle cx="1230.5" cy="439" r="1.6" fill="#1a2a50"/></svg><div class="a" style="left:1248px;top:428px;width:41px;height:22px;border:1px solid #0c0c0c;border-radius:4px;background:#313131"></div><div class="a" style="left:1269px;top:429px;width:1px;height:20px;background:#222"></div><svg><path d="M1275,437.0 L1283,437.0 L1279,441.0Z" fill="#aaa"/></svg><svg><path d="M1256,437 L1264,445" stroke="#eee" stroke-width="2.4"/><circle cx="1255" cy="435" r="3" fill="none" stroke="#eee" stroke-width="2"/><path d="M1253,432 L1256,435" stroke="#313131" stroke-width="1.6"/><path d="M1265,433 L1258,440" stroke="#eee" stroke-width="2"/><path d="M1258,440 L1252,446" stroke="#5a8ad0" stroke-width="2.8"/></svg>
<div class="a" style="left:923px;top:457px;width:367px;height:191px;background:#262626;overflow:hidden">
<div class="cb" style="left:3px;top:6px"></div><svg><path d="M6.5,13 L9,17 L13.5,9" stroke="#eee" stroke-width="1.6" fill="none"/></svg>
<svg><path d="M25,3 L30.5,8.5 M45,3 L39.5,8.5 M25,24 L30.5,18.5 M45,24 L39.5,18.5" stroke="#c81c1c" stroke-width="1.9"/><circle cx="35" cy="13.5" r="3.4" fill="#e82222"/></svg>
<div class="a t" style="left:53px;top:7px;font-size:12.5px;line-height:15px;color:#f0f0f0">Constraint1</div>
<div class="cb" style="left:3px;top:32px"></div><svg><path d="M6.5,39 L9,43 L13.5,35" stroke="#eee" stroke-width="1.6" fill="none"/></svg>
<svg><path d="M25,29 L30.5,34.5 M45,29 L39.5,34.5 M25,50 L30.5,44.5 M45,50 L39.5,44.5" stroke="#c81c1c" stroke-width="1.9"/><circle cx="35" cy="39.5" r="3.4" fill="#e82222"/></svg>
<div class="a t" style="left:53px;top:33px;font-size:12.5px;line-height:15px;color:#f0f0f0">Constraint2</div>
<div class="cb" style="left:3px;top:58px"></div><svg><path d="M6.5,65 L9,69 L13.5,61" stroke="#eee" stroke-width="1.6" fill="none"/></svg>
<svg><path d="M25,55 L30.5,60.5 M45,55 L39.5,60.5 M25,76 L30.5,70.5 M45,76 L39.5,70.5" stroke="#c81c1c" stroke-width="1.9"/><circle cx="35" cy="65.5" r="3.4" fill="#e82222"/></svg>
<div class="a t" style="left:53px;top:59px;font-size:12.5px;line-height:15px;color:#f0f0f0">Constraint3</div>
<div class="cb" style="left:3px;top:84px"></div><svg><path d="M6.5,91 L9,95 L13.5,87" stroke="#eee" stroke-width="1.6" fill="none"/></svg>
<svg><path d="M25,81 L30.5,86.5 M45,81 L39.5,86.5 M25,102 L30.5,96.5 M45,102 L39.5,96.5" stroke="#c81c1c" stroke-width="1.9"/><circle cx="35" cy="91.5" r="3.4" fill="#e82222"/></svg>
<div class="a t" style="left:53px;top:85px;font-size:12.5px;line-height:15px;color:#f0f0f0">Constraint4</div>
<div class="cb" style="left:3px;top:110px"></div><svg><path d="M6.5,117 L9,121 L13.5,113" stroke="#eee" stroke-width="1.6" fill="none"/></svg>
<svg><line x1="25" y1="118" x2="42" y2="118" stroke="#b81e1e" stroke-width="2"/></svg>
<div class="a t" style="left:53px;top:111px;font-size:12.5px;line-height:15px;color:#f0f0f0">Constraint5</div>
<div class="cb" style="left:3px;top:136px"></div><svg><path d="M6.5,143 L9,147 L13.5,139" stroke="#eee" stroke-width="1.6" fill="none"/></svg>
<svg><line x1="25" y1="144" x2="42" y2="144" stroke="#b81e1e" stroke-width="2"/></svg>
<div class="a t" style="left:53px;top:137px;font-size:12.5px;line-height:15px;color:#f0f0f0">Constraint6</div>
<div class="cb" style="left:3px;top:162px"></div><svg><path d="M6.5,169 L9,173 L13.5,165" stroke="#eee" stroke-width="1.6" fill="none"/></svg>
<svg><line x1="34" y1="162" x2="34" y2="178" stroke="#b81e1e" stroke-width="2"/></svg>
<div class="a t" style="left:53px;top:163px;font-size:12.5px;line-height:15px;color:#f0f0f0">Constraint7</div>
<div class="cb" style="left:3px;top:188px"></div><svg><path d="M6.5,195 L9,199 L13.5,191" stroke="#eee" stroke-width="1.6" fill="none"/></svg>
<svg><line x1="34" y1="188" x2="34" y2="204" stroke="#b81e1e" stroke-width="2"/></svg>
<div class="a t" style="left:53px;top:189px;font-size:12.5px;line-height:15px;color:#f0f0f0">Constraint8</div>
</div>
<div class="a" style="left:1276px;top:457px;width:14px;height:191px;background:#232323;border-left:1px solid #1a1a1a"></div>
<div class="a" style="left:1276px;top:457px;width:14px;height:14px;background:#3a3a3a;border:1px solid #222"></div>
<div class="a" style="left:1276px;top:634px;width:14px;height:14px;background:#3a3a3a;border:1px solid #222"></div>
<div class="a" style="left:1277px;top:471px;width:12px;height:103px;background:#474747"></div>
<div class="a" style="left:909px;top:671px;width:395px;height:276px;border-radius:4px;background:#191e2b;border:1px solid #0e0e10"></div><div class="a" style="left:910px;top:672px;width:393px;height:27px;border-radius:3px 3px 0 0;background:linear-gradient(90deg,#030305,#0c0f17 50%,#171c2a)"></div><div class="a" style="left:933px;top:679px;font-size:9.5px;font-weight:bold;line-height:14px;color:#f4f4f4">元素</div><svg><circle cx="1286" cy="685" r="7.5" fill="none" stroke="#6c7280" stroke-width="1.3"/><path d="M1283,683.5 L1286,680.5 L1289,683.5 M1283,687.5 L1286,684.5 L1289,687.5" stroke="#a8b0c0" stroke-width="1.2" fill="none"/></svg><svg><line x1="917" y1="693" x2="928" y2="680" stroke="#eee" stroke-width="1.3"/><circle cx="917" cy="693" r="1.8" fill="#e02020"/><circle cx="928" cy="680" r="1.8" fill="#e02020"/></svg>
<div class="cb" style="left:925px;top:716px"></div><svg><path d="M928.5,723 L931,727 L935.5,719" stroke="#eee" stroke-width="1.6" fill="none"/></svg><div class="a" style="left:955px;top:712px;width:285px;height:22px;border:1px solid #151515;border-radius:4px;background:#343434"></div><div class="a" style="left:1220px;top:713px;width:1px;height:20px;background:#222"></div><svg><path d="M1226,721 L1234,721 L1230,725Z" fill="#999"/></svg><div class="a" style="left:955px;top:716px;width:265px;text-align:center;font-size:10px;font-weight:bold;line-height:14px;color:#f0f0f0">过滤器</div><div class="a" style="left:1248px;top:712px;width:41px;height:22px;border:1px solid #0c0c0c;border-radius:4px;background:#313131"></div><div class="a" style="left:1269px;top:713px;width:1px;height:20px;background:#222"></div><svg><path d="M1275,721.0 L1283,721.0 L1279,725.0Z" fill="#aaa"/></svg><svg><path d="M1256,721 L1264,729" stroke="#eee" stroke-width="2.4"/><circle cx="1255" cy="719" r="3" fill="none" stroke="#eee" stroke-width="2"/><path d="M1253,716 L1256,719" stroke="#313131" stroke-width="1.6"/><path d="M1265,717 L1258,724" stroke="#eee" stroke-width="2"/><path d="M1258,724 L1252,730" stroke="#5a8ad0" stroke-width="2.8"/></svg>
<div class="a" style="left:923px;top:741px;width:367px;height:192px;background:#262626"></div>
<div class="a" style="left:923px;top:741px;width:367px;height:104px;background:#4ba4fa"></div>
<div class="cb" style="left:927px;top:747px;border-color:#fff"></div><svg><path d="M930.5,754 L933,758 L937.5,750" stroke="#fff" stroke-width="1.6" fill="none"/></svg>
<svg><line x1="950" y1="762" x2="967" y2="745" stroke="#333" stroke-width="2.4" opacity="0.5"/><line x1="950" y1="762" x2="967" y2="745" stroke="#70b8b0" stroke-width="1.4"/><circle cx="950" cy="762" r="2.6" fill="#a080c0" stroke="#333" stroke-width="0.6"/><circle cx="967" cy="745" r="2.6" fill="#a080c0" stroke="#333" stroke-width="0.6"/><line x1="978" y1="762" x2="995" y2="745" stroke="#333" stroke-width="2.2" opacity="0.5"/><line x1="978" y1="762" x2="995" y2="745" stroke="#a8c8e8" stroke-width="1.2"/><circle cx="978" cy="762" r="2.6" fill="#70c0b0" stroke="#333" stroke-width="0.6"/><circle cx="995" cy="745" r="2.6" fill="#a080c0" stroke="#333" stroke-width="0.6"/><line x1="1006" y1="762" x2="1023" y2="745" stroke="#333" stroke-width="3" opacity="0.5"/><line x1="1006" y1="762" x2="1023" y2="745" stroke="#f4f4f4" stroke-width="2"/><circle cx="1006" cy="762" r="2.6" fill="#e02020" stroke="#333" stroke-width="0.6"/><circle cx="1023" cy="745" r="2.6" fill="#80d040" stroke="#333" stroke-width="0.6"/><line x1="1038" y1="754" x2="1049" y2="754" stroke="#3a78b8" stroke-width="1.5"/></svg>
<div class="a" style="left:1059px;top:746px;font-size:12.5px;font-weight:bold;line-height:16px;color:#fff">1-线</div>
<div class="cb" style="left:927px;top:773px;border-color:#fff"></div><svg><path d="M930.5,780 L933,784 L937.5,776" stroke="#fff" stroke-width="1.6" fill="none"/></svg>
<svg><line x1="950" y1="788" x2="967" y2="771" stroke="#333" stroke-width="3.2" opacity="0.5"/><line x1="950" y1="788" x2="967" y2="771" stroke="#60c030" stroke-width="2.2"/><circle cx="950" cy="788" r="2.6" fill="#e02020" stroke="#333" stroke-width="0.6"/><circle cx="967" cy="771" r="2.6" fill="#e02020" stroke="#333" stroke-width="0.6"/><line x1="978" y1="788" x2="995" y2="771" stroke="#333" stroke-width="2.2" opacity="0.5"/><line x1="978" y1="788" x2="995" y2="771" stroke="#a8c8e8" stroke-width="1.2"/><circle cx="978" cy="788" r="2.6" fill="#70c0b0" stroke="#333" stroke-width="0.6"/><circle cx="995" cy="771" r="2.6" fill="#a080c0" stroke="#333" stroke-width="0.6"/><line x1="1006" y1="788" x2="1023" y2="771" stroke="#333" stroke-width="3" opacity="0.5"/><line x1="1006" y1="788" x2="1023" y2="771" stroke="#f4f4f4" stroke-width="2"/><circle cx="1006" cy="788" r="2.6" fill="#e02020" stroke="#333" stroke-width="0.6"/><circle cx="1023" cy="771" r="2.6" fill="#80d040" stroke="#333" stroke-width="0.6"/><line x1="1038" y1="780" x2="1049" y2="780" stroke="#3a78b8" stroke-width="1.5"/></svg>
<div class="a" style="left:1059px;top:772px;font-size:12.5px;font-weight:bold;line-height:16px;color:#fff">2-线</div>
<div class="cb" style="left:927px;top:799px;border-color:#fff"></div><svg><path d="M930.5,806 L933,810 L937.5,802" stroke="#fff" stroke-width="1.6" fill="none"/></svg>
<svg><line x1="950" y1="814" x2="967" y2="797" stroke="#333" stroke-width="3.2" opacity="0.5"/><line x1="950" y1="814" x2="967" y2="797" stroke="#60c030" stroke-width="2.2"/><circle cx="950" cy="814" r="2.6" fill="#e02020" stroke="#333" stroke-width="0.6"/><circle cx="967" cy="797" r="2.6" fill="#e02020" stroke="#333" stroke-width="0.6"/><line x1="978" y1="814" x2="995" y2="797" stroke="#333" stroke-width="2.2" opacity="0.5"/><line x1="978" y1="814" x2="995" y2="797" stroke="#a8c8e8" stroke-width="1.2"/><circle cx="978" cy="814" r="2.6" fill="#70c0b0" stroke="#333" stroke-width="0.6"/><circle cx="995" cy="797" r="2.6" fill="#a080c0" stroke="#333" stroke-width="0.6"/><line x1="1006" y1="814" x2="1023" y2="797" stroke="#333" stroke-width="3" opacity="0.5"/><line x1="1006" y1="814" x2="1023" y2="797" stroke="#f4f4f4" stroke-width="2"/><circle cx="1006" cy="814" r="2.6" fill="#e02020" stroke="#333" stroke-width="0.6"/><circle cx="1023" cy="797" r="2.6" fill="#80d040" stroke="#333" stroke-width="0.6"/><line x1="1038" y1="806" x2="1049" y2="806" stroke="#3a78b8" stroke-width="1.5"/></svg>
<div class="a" style="left:1059px;top:798px;font-size:12.5px;font-weight:bold;line-height:16px;color:#fff">3-线</div>
<div class="cb" style="left:927px;top:825px;border-color:#fff"></div><svg><path d="M930.5,832 L933,836 L937.5,828" stroke="#fff" stroke-width="1.6" fill="none"/></svg>
<svg><line x1="950" y1="840" x2="967" y2="823" stroke="#333" stroke-width="2.4" opacity="0.5"/><line x1="950" y1="840" x2="967" y2="823" stroke="#70b8b0" stroke-width="1.4"/><circle cx="950" cy="840" r="2.6" fill="#a080c0" stroke="#333" stroke-width="0.6"/><circle cx="967" cy="823" r="2.6" fill="#a080c0" stroke="#333" stroke-width="0.6"/><line x1="978" y1="840" x2="995" y2="823" stroke="#333" stroke-width="2.2" opacity="0.5"/><line x1="978" y1="840" x2="995" y2="823" stroke="#a8c8e8" stroke-width="1.2"/><circle cx="978" cy="840" r="2.6" fill="#70c0b0" stroke="#333" stroke-width="0.6"/><circle cx="995" cy="823" r="2.6" fill="#a080c0" stroke="#333" stroke-width="0.6"/><line x1="1006" y1="840" x2="1023" y2="823" stroke="#333" stroke-width="3" opacity="0.5"/><line x1="1006" y1="840" x2="1023" y2="823" stroke="#f4f4f4" stroke-width="2"/><circle cx="1006" cy="840" r="2.6" fill="#e02020" stroke="#333" stroke-width="0.6"/><circle cx="1023" cy="823" r="2.6" fill="#80d040" stroke="#333" stroke-width="0.6"/><line x1="1038" y1="832" x2="1049" y2="832" stroke="#3a78b8" stroke-width="1.5"/></svg>
<div class="a" style="left:1059px;top:824px;font-size:12.5px;font-weight:bold;line-height:16px;color:#fff">4-线</div>
</body></html>
